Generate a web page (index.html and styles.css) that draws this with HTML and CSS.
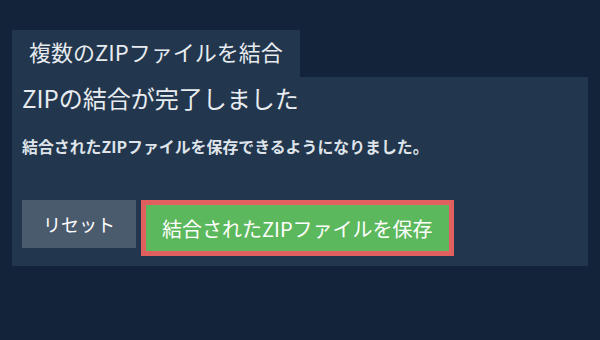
FILE: index.html
```html
<!DOCTYPE html>
<html lang="ja">
<head>
    <meta charset="UTF-8">
    <meta name="viewport" content="width=device-width, initial-scale=1.0">
    <link rel="stylesheet" href="styles.css">
</head>
<body>
    <div class="container">
        <div class="tab">複数のZIPファイルを結合</div>
        <div class="panel">
            <h2 class="done-title">ZIPの結合が完了しました</h2>
            <p class="done-text">結合されたZIPファイルを保存できるようになりました。</p>
            <div class="actions">
                <button class="btn btn-reset">リセット</button>
                <button class="btn btn-save">結合されたZIPファイルを保存</button>
            </div>
        </div>
    </div>
</body>
</html>
```

FILE: styles.css
```css
body {
    margin: 0;
    background-color: #13233a;
    font-family: "Noto Sans CJK JP", "Noto Sans", sans-serif;
    color: #e8ecf0;
}

.container {
    padding: 30px 12px;
}

.tab {
    display: inline-block;
    background-color: #22364d;
    font-size: 22px;
    line-height: 38px;
    height: 40px;
    padding: 2px 17px 5px;
}

.panel {
    background-color: #22364d;
    padding: 4px 10px 10px;
}

.done-title {
    font-size: 24px;
    font-weight: normal;
    line-height: 34px;
    margin: 0;
}

.done-text {
    font-size: 15.9px;
    font-weight: bold;
    line-height: 22px;
    margin: 21px 0 42px;
    color: #dfe4ea;
}

.actions {
    display: flex;
    align-items: flex-start;
    gap: 5px;
}

.btn {
    font-family: inherit;
    color: #fff;
    border: none;
    cursor: pointer;
}

.btn-reset {
    background-color: #4b5b6e;
    font-size: 18px;
    height: 48px;
    padding: 0 21px;
}

.btn-save {
    background-color: #5cb85c;
    border: 5px solid #e06060;
    font-size: 20px;
    height: 56px;
    padding: 0 16px;
}
```
